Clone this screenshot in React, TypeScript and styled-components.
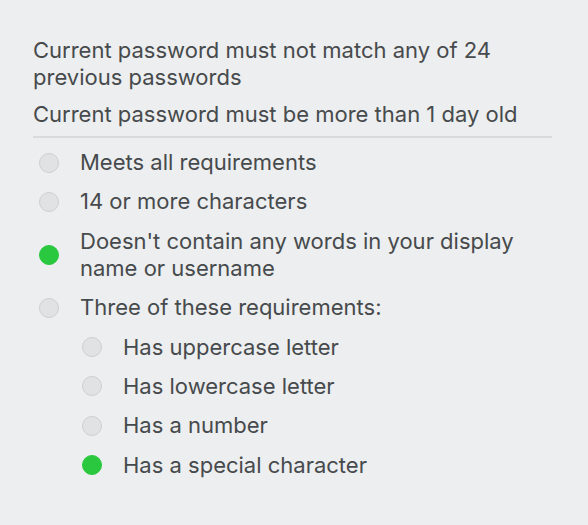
import React from "react";
import styled, { createGlobalStyle } from "styled-components";

const Global = createGlobalStyle`
  html, body { margin: 0; padding: 0; background: #eceeef; }
  body { font-family: Inter, "Liberation Sans", Arial, sans-serif; -webkit-font-smoothing: antialiased; }
`;

const Panel = styled.div`
  width: 588px;
  height: 525px;
  box-sizing: border-box;
  padding: 37px 36px 0 33px;
  background: #eceeef;
  color: #474a4c;
  font-size: 22px;
  line-height: 27px;
`;

const Note = styled.p`
  margin: 0 0 10px 0;
  max-width: 519px;
`;

const Divider = styled.hr`
  border: none;
  height: 2px;
  background: #d8dadb;
  margin: -2px 0 11px 0;
  width: 519px;
`;

const List = styled.ul`
  list-style: none;
  margin: 0;
  padding: 0;
  display: flex;
  flex-direction: column;
  gap: 12.4px;
`;

const Item = styled.li<{ $indent?: boolean }>`
  display: flex;
  align-items: center;
  padding-left: ${(p) => (p.$indent ? "49px" : "6px")};
`;

const Dot = styled.span<{ $ok?: boolean }>`
  flex: none;
  width: 20px;
  height: 20px;
  border-radius: 50%;
  box-sizing: border-box;
  margin-right: 21px;
  background: ${(p) => (p.$ok ? "#29c83f" : "#e1e2e3")};
  border: 1px solid ${(p) => (p.$ok ? "#29c83f" : "#cdcfd0")};
`;

const Label = styled.span`
  display: block;
`;

const items: { text: React.ReactNode; ok?: boolean; indent?: boolean }[] = [
  { text: "Meets all requirements" },
  { text: "14 or more characters" },
  { text: <>Doesn't contain any words in your display<br />name or username</>, ok: true },
  { text: "Three of these requirements:" },
  { text: "Has uppercase letter", indent: true },
  { text: "Has lowercase letter", indent: true },
  { text: "Has a number", indent: true },
  { text: "Has a special character", indent: true, ok: true },
];

export default function App() {
  return (
    <>
      <Global />
      <Panel>
        <Note>Current password must not match any of 24 previous passwords</Note>
        <Note>Current password must be more than 1 day old</Note>
        <Divider />
        <List>
          {items.map((it, i) => (
            <Item key={i} $indent={it.indent}>
              <Dot $ok={it.ok} />
              <Label>{it.text}</Label>
            </Item>
          ))}
        </List>
      </Panel>
    </>
  );
}
